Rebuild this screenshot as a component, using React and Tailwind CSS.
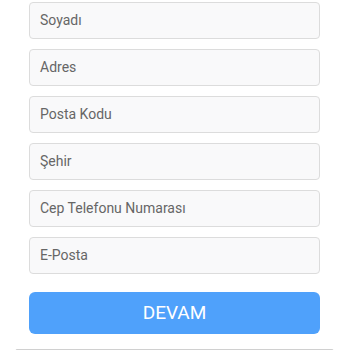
export default function App() {
  const fields = ["Soyadı", "Adres", "Posta Kodu", "Şehir", "Cep Telefonu Numarası", "E-Posta"];
  return (
    <div className="w-[350px] h-[350px] overflow-hidden bg-white" style={{ fontFamily: "Roboto, 'Liberation Sans', sans-serif" }}>
      <div className="pt-[2px] pl-[29px] pr-[30px] flex flex-col gap-[10px]">
        {fields.map((f) => (
          <div key={f} className="h-[37px] rounded-[4px] border border-[#dcdcdc] bg-[#f9f9fa] flex items-center pl-[10px] text-[14px] font-normal text-[#666]">
            {f}
          </div>
        ))}
      </div>
      <div className="mt-[18px] pl-[29px] pr-[30px]">
        <div className="h-[42px] rounded-[6px] bg-[#4fa1fb] flex items-center justify-center text-white text-[19px] font-normal">
          DEVAM
        </div>
      </div>
      <div className="mt-[15px] ml-[15px] w-[319px] h-[20px] border border-[#d0d0d0] rounded-[2px]"></div>
    </div>
  );
}
